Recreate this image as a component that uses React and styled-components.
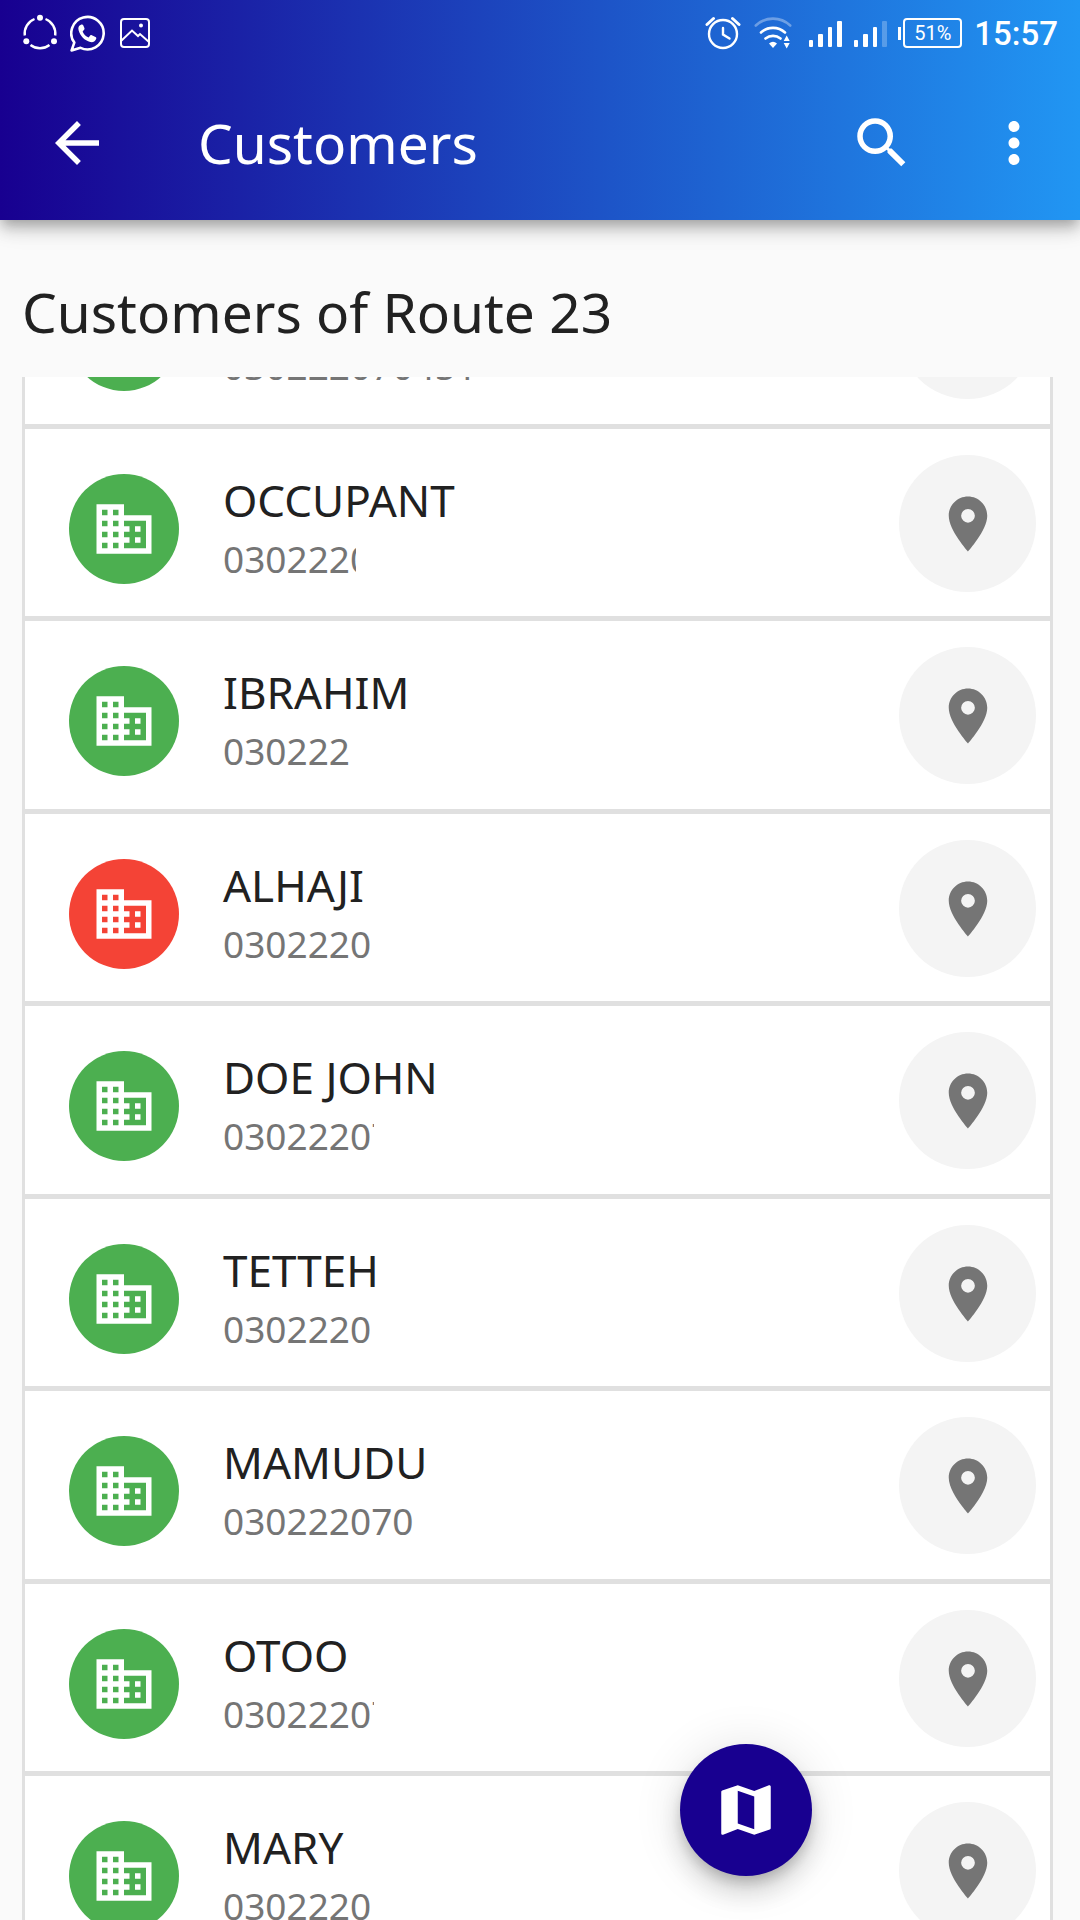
import React, {useLayoutEffect, useRef} from 'react';
import styled, {createGlobalStyle} from 'styled-components';
import {MdArrowBack, MdBusiness, MdLocationOn, MdMap, MdMoreVert, MdSearch} from 'react-icons/md';

// textWidth cuts the number off where the rest of it is hidden
const customers = [
    {id: 1, name: 'OCCUPANT', phone: '030222070451', textWidth: 253, active: true},
    {id: 2, name: 'OCCUPANT', phone: '0302220', textWidth: 133, active: true},
    {id: 3, name: 'IBRAHIM', phone: '030222', active: true},
    {id: 4, name: 'ALHAJI', phone: '0302220', active: false},
    {id: 5, name: 'DOE JOHN', phone: '03022207', textWidth: 151, active: true},
    {id: 6, name: 'TETTEH', phone: '0302220', active: true},
    {id: 7, name: 'MAMUDU', phone: '030222070', active: true},
    {id: 8, name: 'OTOO', phone: '03022207', textWidth: 151, active: true},
    {id: 9, name: 'MARY', phone: '0302220', active: true},
];

const INITIAL_SCROLL = 143;

const StatusBar = () => {
    return <StatusWrapper>
                <StatusGroup>
                    <svg width="36" height="38" viewBox="0 0 36 38" fill="none" stroke="white" strokeWidth="2.4">
                        <path d="M2.8 21.500A15.500 15.500 0 0 1 12.500 5M23.500 5A15.500 15.500 0 0 1 33.200 21.500M8.500 31A15.500 15.500 0 0 0 27.500 31"/>
                        <g fill="white" stroke="none">
                            <circle cx="18" cy="3.700" r="3"/>
                            <circle cx="4.300" cy="27.300" r="3"/>
                            <circle cx="32" cy="27.300" r="3"/>
                        </g>
                    </svg>
                    <svg width="38" height="38" viewBox="0 0 38 38" fill="none" stroke="white" strokeWidth="2.6">
                        <path d="M1.600 36.400L4.300 28.600A16.200 16.200 0 1 1 10.500 33.800Z" strokeLinejoin="round"/>
                        <path d="M10.500 11c-2 .8-2.500 3-1.900 5.300 1.500 5.700 6 10.300 11.700 11.700 2.700.6 5.300-.8 6-3.600 0-.7-.2-1-.8-1.300l-3.700-1.900c-.6-.3-1.200-.2-1.600.3l-1.600 2c-2.800-1.200-4.800-3.300-6-6.100l1.500-1.700c.5-.5.600-1 .3-1.700l-1.200-2.800c-.4-.8-1.300-.9-2.700-.2z" fill="white" stroke="none"/>
                    </svg>
                    <svg width="30" height="38" viewBox="0 0 30 38" fill="none" stroke="white" strokeWidth="2">
                        <rect x="1" y="5" width="28" height="28" rx="3"/>
                        <path d="M1 27L12 16.500L18 22L20 20L29 28"/>
                        <circle cx="21" cy="11.500" r="2" fill="white" stroke="none"/>
                    </svg>
                </StatusGroup>
                <StatusGroup>
                    <svg width="36" height="38" viewBox="0 0 36 38" fill="none" stroke="white" strokeWidth="2.4" strokeLinecap="round">
                        <circle cx="18" cy="20" r="14"/>
                        <path d="M18 14v6.500l6.500 4"/>
                        <path d="M2 10.500L8.500 4.500M34 10.500L27.500 4.500" strokeWidth="3"/>
                    </svg>
                    <svg width="44" height="38" viewBox="-1 0 44 38" fill="none" stroke="white" strokeWidth="2.600" strokeLinecap="round">
                        <path d="M1.800 11.500A25 25 0 0 1 36.200 11.500" opacity="0.35"/>
                        <path d="M7 18.500A18 18 0 0 1 31 18.500M11.500 24.500A12 12 0 0 1 26.500 24.500"/>
                        <path d="M15 29.500Q19 26 23 29.500L19 34Z" fill="white" stroke="none"/>
                        <path d="M32.700 21.500l3 5.500h-6zM32.700 34.500l3-5.500h-6z" fill="white" stroke="none"/>
                    </svg>
                    <Signal bars={4}/>
                    <Signal bars={3}/>
                    <Battery>51%</Battery>
                    <Clock>15:57</Clock>
                </StatusGroup>
            </StatusWrapper>
}

const Signal = ({bars}) => {
    return <svg width="33" height="38" viewBox="0 0 33 38" fill="white">
                <rect x="0" y="26" width="4" height="7" rx="1"/>
                <rect x="9" y="20" width="5" height="13" rx="1"/>
                <rect x="19" y="13" width="4" height="20" rx="1"/>
                <rect x="28" y="7" width="5" height="26" rx="1" opacity={bars > 3 ? 1 : 0.25}/>
            </svg>
}

const Customer = ({customer}) => {
    return <Row>
                <Avatar $active={customer.active}><MdBusiness size={66}/></Avatar>
                <Details>
                    <Name>{customer.name}</Name>
                    <Phone $width={customer.textWidth}>{customer.phone}</Phone>
                </Details>
                <PinButton aria-label={`Locate ${customer.name}`}><MdLocationOn size={66}/></PinButton>
            </Row>
}

const App = () => {

    const listRef = useRef(null);

    useLayoutEffect(() => {
        listRef.current.scrollTop = INITIAL_SCROLL;
    }, [])

    return <Screen>
                <GlobalStyle/>
                <Header>
                    <StatusBar/>
                    <Toolbar>
                        <IconButton aria-label="Back"><MdArrowBack size={66}/></IconButton>
                        <Title>Customers</Title>
                        <IconButton aria-label="Search"><MdSearch size={66}/></IconButton>
                        <IconButton aria-label="More options"><MdMoreVert size={66}/></IconButton>
                    </Toolbar>
                </Header>
                <Heading>Customers of Route 23</Heading>
                <List ref={listRef}>
                    {customers.map(customer => <Customer key={customer.id} customer={customer}/>)}
                </List>
                <MapButton aria-label="Show map"><MdMap size={66}/></MapButton>
            </Screen>
}

export default App;

const GlobalStyle = createGlobalStyle`
    * {
        box-sizing: border-box;
    }

    body {
        margin: 0;
        background: #fafafa;
        font-family: "Noto Sans", sans-serif;
    }

    button {
        display: flex;
        align-items: center;
        justify-content: center;
        border: none;
        padding: 0;
        cursor: pointer;
    }

    svg {
        display: block;
        flex-shrink: 0;
    }
`;

const Screen = styled.div`
    display: flex;
    flex-direction: column;
    height: 100vh;
    overflow: hidden;
    color: #212121;
`;

const Header = styled.header`
    background: linear-gradient(to right, #180090, #2196f3);
    color: white;
    box-shadow: 0 6px 11px -3px rgba(0, 0, 0, 0.2),
        0 11px 14px rgba(0, 0, 0, 0.14),
        0 3px 28px rgba(0, 0, 0, 0.12);
`;

const StatusWrapper = styled.div`
    display: flex;
    align-items: center;
    justify-content: space-between;
    height: 66px;
    padding: 0 22px;
`;

const StatusGroup = styled.div`
    display: flex;
    align-items: center;
    gap: 12px;
`;

const Battery = styled.span`
    position: relative;
    width: 59px;
    height: 30px;
    margin-left: 4px;
    border: 2px solid white;
    border-radius: 4px;
    font: 20px/26px Roboto, sans-serif;
    text-align: center;

    &::before {
        content: "";
        position: absolute;
        top: 7px;
        left: -7px;
        width: 3px;
        height: 13px;
        background: white;
    }
`;

const Clock = styled.span`
    padding-top: 2px;
    font: 500 33px/38px Roboto, sans-serif;
`;

const Toolbar = styled.div`
    display: flex;
    align-items: center;
    height: 154px;
    padding: 0 0 0 11px;
`;

const IconButton = styled.button`
    width: 132px;
    height: 132px;
    background: none;
    color: white;
`;

const Title = styled.h1`
    flex: 1;
    margin: 0;
    padding-left: 55px;
    font-size: 55px;
    font-weight: 400;
    line-height: 74px;
`;

const Heading = styled.h2`
    margin: 0;
    padding: 55px 22px 28px;
    font-size: 55px;
    font-weight: 400;
    line-height: 74px;
`;

const List = styled.ul`
    flex: 1;
    min-height: 0;
    margin: 0 27px 0 22px;
    padding: 0;
    overflow-y: auto;
    list-style: none;
    scrollbar-width: none;
`;

const Row = styled.li`
    display: flex;
    align-items: flex-start;
    height: 192px;
    padding: 26px 14px 0 44px;
    border: 3px solid #e0e0e0;
    border-top-width: 2px;
    background: white;

    &:nth-child(odd) {
        height: 193px;
    }
`;

const Avatar = styled.div`
    display: flex;
    align-items: center;
    justify-content: center;
    width: 110px;
    height: 110px;
    margin-top: 19px;
    border-radius: 50%;
    background: ${({$active}) => $active ? '#4caf50' : '#f44336'};
    color: white;
`;

const Details = styled.div`
    flex: 1;
    padding: 15px 44px 0;
`;

const Name = styled.div`
    font-size: 44px;
    line-height: 60px;
`;

const Phone = styled.div`
    width: ${({$width}) => $width ? `${$width}px` : 'auto'};
    overflow: hidden;
    color: #757575;
    font-size: 37px;
    line-height: 58px;
    white-space: nowrap;
`;

const PinButton = styled.button`
    width: 137px;
    height: 137px;
    border-radius: 50%;
    background: #f4f4f4;
    color: #757575;
`;

const MapButton = styled.button`
    position: absolute;
    right: 268px;
    bottom: 44px;
    width: 132px;
    height: 132px;
    border-radius: 50%;
    background: #180090;
    color: white;
    box-shadow: 0 8px 14px -3px rgba(0, 0, 0, 0.2),
        0 17px 28px rgba(0, 0, 0, 0.14),
        0 3px 50px rgba(0, 0, 0, 0.12);
`;
